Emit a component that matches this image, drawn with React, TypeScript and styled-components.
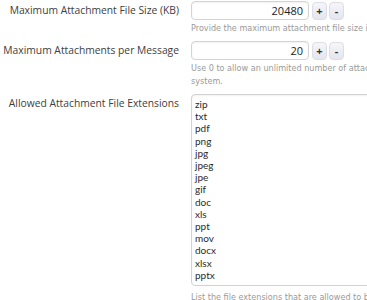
import React from 'react'
import styled, { createGlobalStyle } from 'styled-components'

const GlobalStyle = createGlobalStyle`
  html, body {
    margin: 0;
    padding: 0;
    background: #fff;
  }
  body {
    font-family: 'Open Sans', 'Liberation Sans', sans-serif;
    overflow: hidden;
  }
`

const extensions = [
  'zip', 'txt', 'pdf', 'png', 'jpg', 'jpeg', 'jpe', 'gif',
  'doc', 'xls', 'ppt', 'mov', 'docx', 'xlsx', 'pptx',
]

const App: React.FC = () => {
  return (
    <>
      <GlobalStyle />
      <Form>
        <Row>
          <Label>Maximum Attachment File Size (KB)</Label>
          <Field>
            <SpinBox>
              <NumberInput value="20480" readOnly />
              <SpinButton>+</SpinButton>
              <SpinButton>-</SpinButton>
            </SpinBox>
            <Explain>Provide the maximum attachment file size in kilobytes.</Explain>
          </Field>
        </Row>
        <Row>
          <Label>Maximum Attachments per Message</Label>
          <Field>
            <SpinBox>
              <NumberInput value="20" readOnly />
              <SpinButton>+</SpinButton>
              <SpinButton>-</SpinButton>
            </SpinBox>
            <Explain>
              Use 0 to allow an unlimited number of attachments to be uploaded to the system.
            </Explain>
          </Field>
        </Row>
        <Row>
          <Label>Allowed Attachment File Extensions</Label>
          <Field>
            <TextArea value={extensions.join('\n')} readOnly rows={15} />
            <Explain>
              List the file extensions that are allowed to be uploaded.
            </Explain>
          </Field>
        </Row>
      </Form>
    </>
  )
}

const Form = styled.div`
  width: 560px;
  padding-top: 1px;
`

const Row = styled.div`
  display: grid;
  grid-template-columns: 179px 1fr;
  column-gap: 12px;
  margin-bottom: 6px;
`

const Label = styled.div`
  text-align: right;
  white-space: nowrap;
  font-size: 10.3px;
  color: #404040;
  line-height: 19px;
`

const Field = styled.div`
  display: flex;
  flex-direction: column;
  align-items: flex-start;
`

const SpinBox = styled.div`
  display: flex;
  align-items: center;
  gap: 2px;
`

const NumberInput = styled.input`
  box-sizing: border-box;
  width: 118px;
  height: 19px;
  margin: 0 1px 0 0;
  padding: 0 5px;
  border: 1px solid #d4d4d4;
  border-radius: 4px;
  background: #fff;
  box-shadow: inset 0 1px 2px rgba(0, 0, 0, 0.06);
  text-align: right;
  font-family: 'Open Sans', sans-serif;
  font-size: 11px;
  color: #222;
  outline: none;
`

const SpinButton = styled.button`
  box-sizing: border-box;
  width: 15px;
  height: 18px;
  padding: 0;
  border: 1px solid #dcdde6;
  border-radius: 4px;
  background: linear-gradient(#f6f6fa, #e4e5ee);
  font-family: 'Open Sans', sans-serif;
  font-size: 11px;
  font-weight: bold;
  line-height: 15px;
  color: #333;
`

const Explain = styled.div`
  margin-top: 2px;
  font-family: 'DejaVu Sans', sans-serif;
  font-size: 8.1px;
  line-height: 13px;
  color: #9a9a9a;
  width: 300px;
`

const TextArea = styled.textarea`
  box-sizing: border-box;
  width: 300px;
  height: 192px;
  margin: 0 0 3px;
  padding: 3px 3px;
  border: 1px solid #d2d2d2;
  border-radius: 4px;
  box-shadow: inset 0 1px 2px rgba(0, 0, 0, 0.06);
  resize: none;
  font-family: 'Lato', sans-serif;
  font-size: 10px;
  line-height: 12.2px;
  color: #2a2a2a;
  overflow: hidden;
  outline: none;
`

export default App
